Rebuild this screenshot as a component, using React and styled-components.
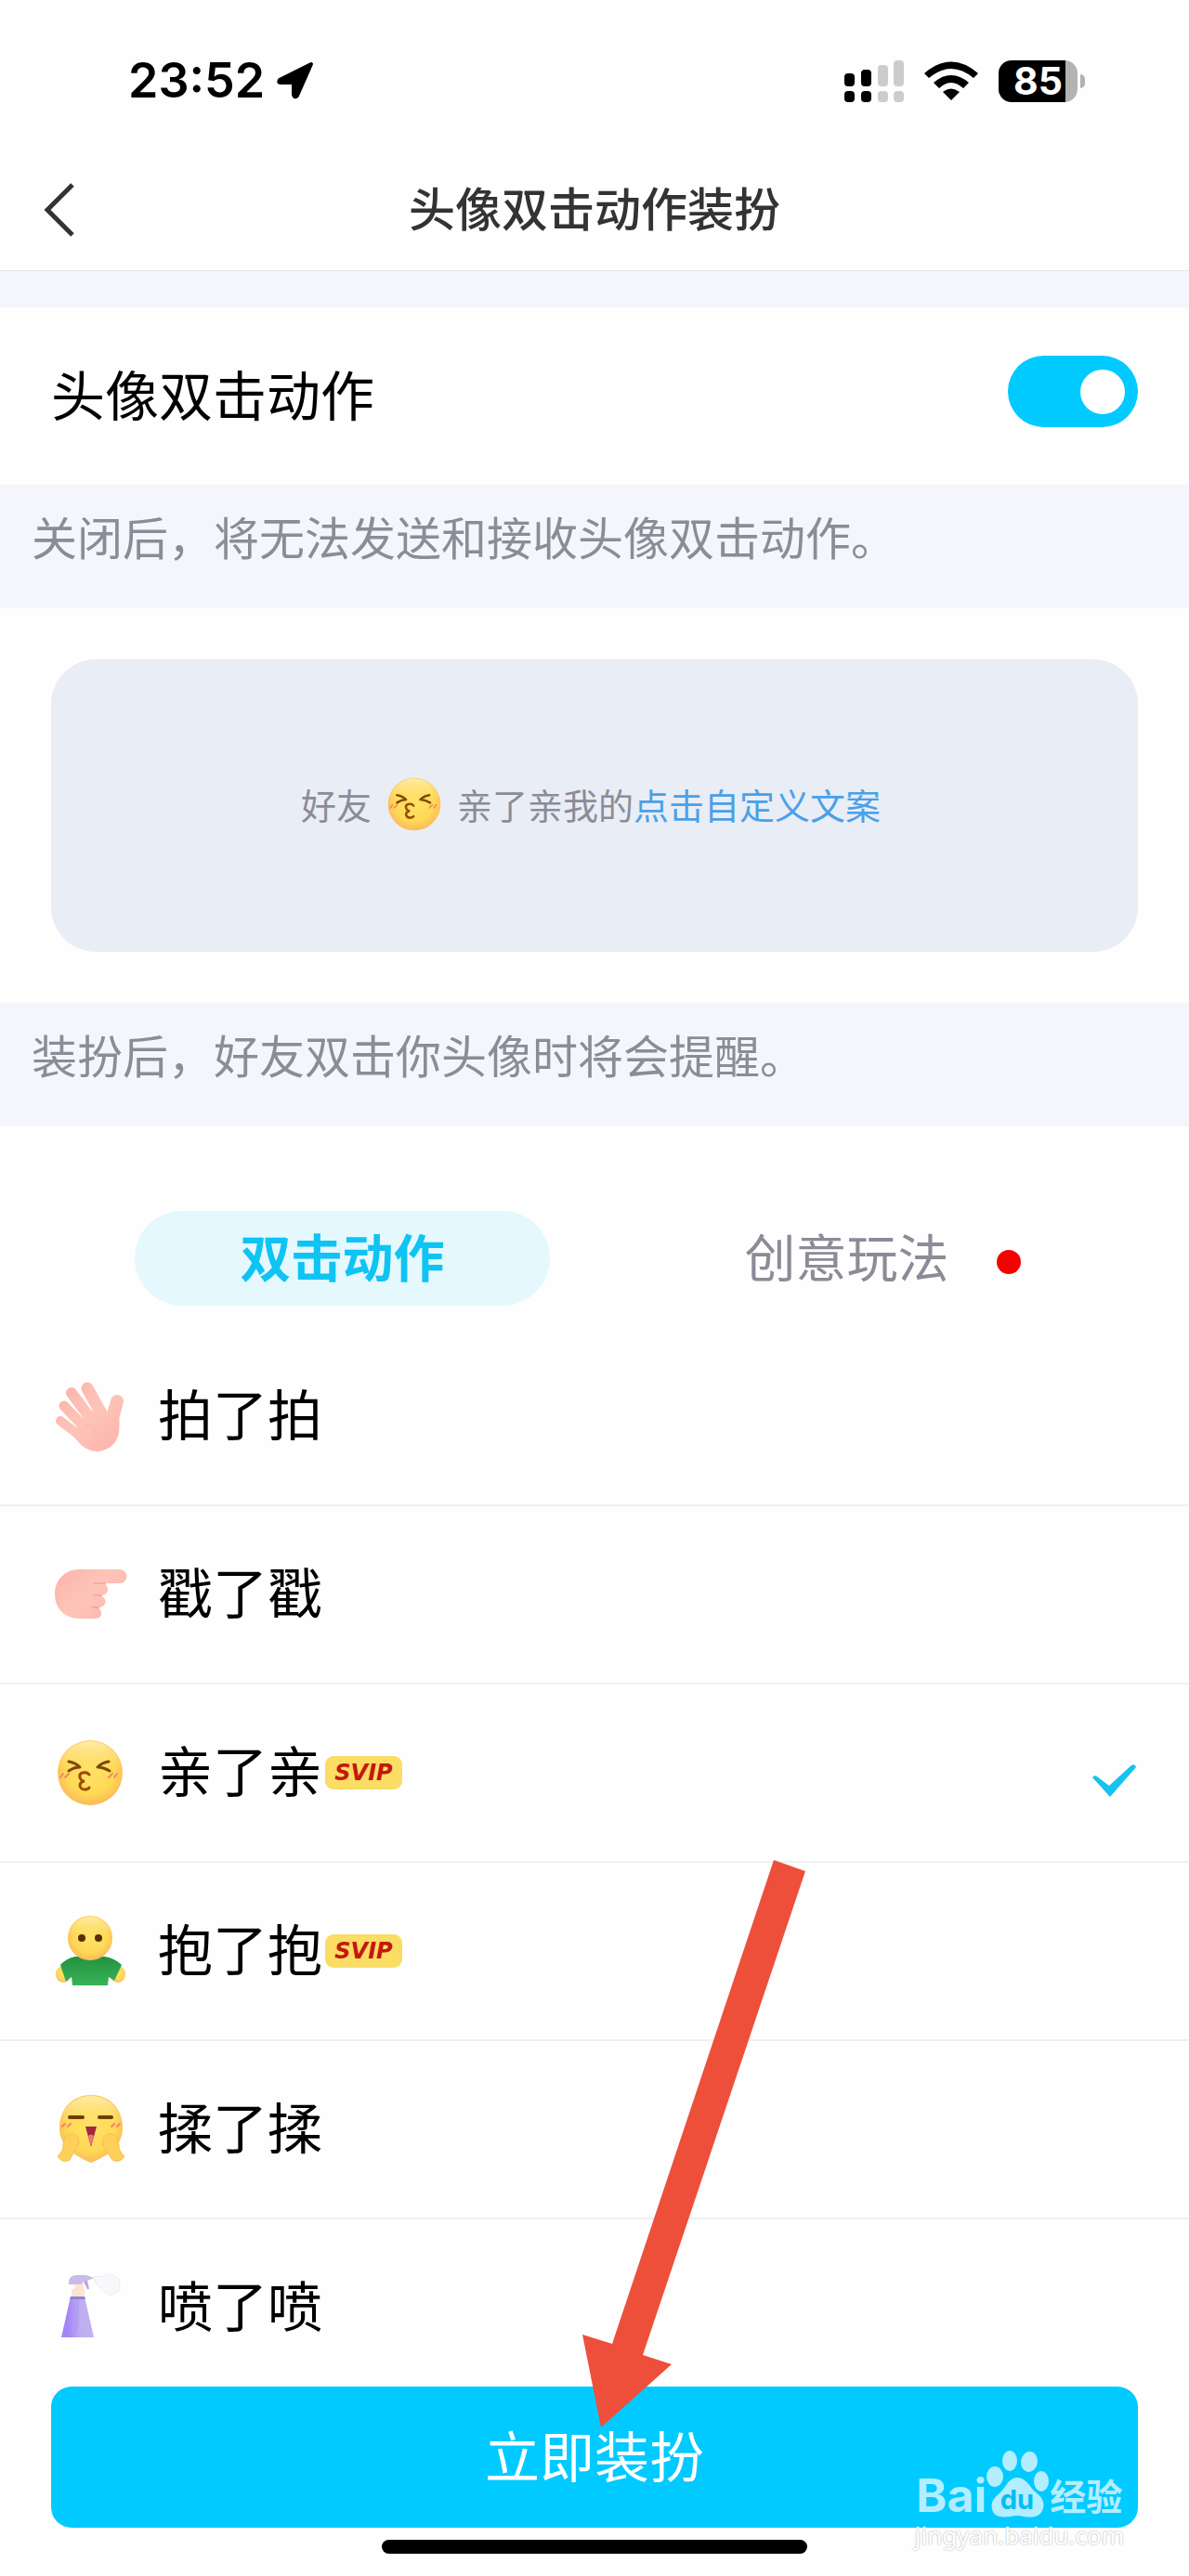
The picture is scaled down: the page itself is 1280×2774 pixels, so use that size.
import React, { useState } from "react";
import styled, { createGlobalStyle } from "styled-components";

const GlobalStyle = createGlobalStyle`
  *, *::before, *::after {
    box-sizing: border-box;
  }

  body {
    margin: 0;
    background: #fefefe;
    color: #000;
    font-family: "Noto Sans CJK SC", sans-serif;
  }
`;

const Page = styled.div`
  position: relative;
  display: flex;
  flex-direction: column;
  min-height: 100vh;
`;

const StatusBar = styled.div`
  display: flex;
  align-items: center;
  justify-content: space-between;
  height: 160px;
  padding: 14px 112px 0 138px;
`;

const StatusGroup = styled.div`
  display: flex;
  align-items: center;
  gap: ${(props) => props.$gap}px;
`;

const Clock = styled.span`
  font-family: "Inter", sans-serif;
  font-size: 52px;
  font-weight: 600;
  line-height: 60px;
`;

const Battery = styled.div`
  display: flex;
  align-items: center;
  gap: 3px;

  &::after {
    content: "";
    width: 5px;
    height: 15px;
    border-radius: 0 5px 5px 0;
    background: #b3b3b3;
  }
`;

const BatteryLevel = styled.span`
  width: 85px;
  height: 45px;
  border-radius: 14px;
  background: linear-gradient(to right, #000 85%, #b3b3b3 85%);
  color: #fff;
  font-family: "Inter", sans-serif;
  font-size: 41px;
  font-weight: 700;
  line-height: 45px;
  text-align: center;
`;

const Header = styled.header`
  display: grid;
  grid-template-columns: 80px 1fr 80px;
  align-items: center;
  height: 132px;
  border-bottom: 1px solid #e4e8e8;
`;

const BackButton = styled.button`
  display: flex;
  justify-content: flex-end;
  padding: 0;
  border: none;
  background: none;
  cursor: pointer;
`;

const Title = styled.h1`
  margin: 0;
  padding-bottom: 8px;
  color: #333;
  font-size: 50px;
  font-weight: 500;
  line-height: 72px;
  text-align: center;
`;

const Divider = styled.div`
  height: 39px;
  background: #f4f6fb;
`;

const SwitchRow = styled.label`
  display: flex;
  justify-content: space-between;
  height: 191px;
  padding: 52px 55px 62px;
  font-size: 58px;
  line-height: 80px;
`;

const Switch = styled.input`
  appearance: none;
  display: flex;
  align-items: center;
  justify-content: ${(props) => (props.checked ? "flex-end" : "flex-start")};
  width: 140px;
  height: 77px;
  margin: 0;
  padding: 0 14px;
  border-radius: 39px;
  background: ${(props) => (props.checked ? "#00caff" : "#d5d8df")};
  cursor: pointer;

  &::before {
    content: "";
    width: 48px;
    height: 48px;
    border-radius: 50%;
    background: #fff;
  }
`;

const Hint = styled.p`
  margin: 0;
  padding: 20px 34px 43px;
  background: #f4f6fb;
  color: #8b8c97;
  font-size: 49px;
  line-height: 70px;
`;

const PreviewSection = styled.section`
  padding: 55px;
`;

const Preview = styled.div`
  display: flex;
  align-items: center;
  justify-content: center;
  height: 315px;
  padding: 0 8px 4px 0;
  border-radius: 48px;
  background: #e9edf6;
  color: #8b8c97;
  font-size: 38px;
  line-height: 56px;
`;

const PreviewEmoji = styled.span`
  display: flex;
  margin: 0 12px;
`;

const CustomLink = styled.a`
  color: #4ba0e6;
  text-decoration: none;
`;

const Tabs = styled.div`
  display: grid;
  grid-template-columns: 1fr 1fr;
  gap: 96px;
  padding: 91px 145px 24px;
`;

const Tab = styled.button`
  display: flex;
  align-items: center;
  justify-content: center;
  position: relative;
  height: 102px;
  padding: 0 0 8px;
  border: none;
  border-radius: 51px;
  background: ${(props) => (props.$active ? "#e4f8fe" : "transparent")};
  color: ${(props) => (props.$active ? "#0fc3f2" : "#8b8c97")};
  font-family: inherit;
  font-size: 55px;
  font-weight: ${(props) => (props.$active ? 700 : 400)};
  cursor: pointer;
`;

const RedDot = styled.span`
  position: absolute;
  top: 42px;
  right: 36px;
  width: 26px;
  height: 26px;
  border-radius: 50%;
  background: #f60000;
`;

const ActionList = styled.ul`
  margin: 0;
  padding: 0;
  list-style: none;
`;

const ActionRow = styled.label`
  display: flex;
  align-items: center;
  height: 192px;
  padding: 0 55px;
  border-bottom: 2px solid #f0f0f1;
  cursor: pointer;
`;

const HiddenRadio = styled.input`
  appearance: none;
  width: 0;
  height: 0;
  margin: 0;
`;

const ActionIcon = styled.span`
  display: flex;
  margin-right: 31px;
`;

const ActionName = styled.span`
  padding: 0 3px 8px 0;
  font-size: 59px;
  line-height: 84px;
`;

const SvipBadge = styled.span`
  width: 83px;
  height: 36px;
  border-radius: 9px;
  background: #fbdc65;
  color: #c3180e;
  font-family: "DejaVu Sans", sans-serif;
  font-size: 24px;
  font-style: italic;
  font-weight: 700;
  line-height: 36px;
  text-align: center;
`;

const CheckMark = styled.svg`
  margin-left: auto;
`;

const Footer = styled.footer`
  position: relative;
  display: flex;
  flex-direction: column;
  align-items: center;
  margin-top: -12px;
  padding: 0 55px 24px;
  background: #fefefe;
`;

const ApplyButton = styled.button`
  width: 100%;
  height: 152px;
  padding: 0 0 8px;
  border: none;
  border-radius: 22px;
  background: #00caff;
  color: #fff;
  font-family: inherit;
  font-size: 59px;
  cursor: pointer;
`;

const HomeIndicator = styled.div`
  width: 458px;
  height: 15px;
  margin-top: 13px;
  border-radius: 8px;
  background: #000;
`;

const Pointer = styled.svg`
  position: absolute;
  left: calc(50% - 13px);
  bottom: 160px;
  pointer-events: none;
`;

const Watermark = styled.div`
  position: absolute;
  right: 70px;
  bottom: 26px;
  display: flex;
  flex-direction: column;
  align-items: center;
  pointer-events: none;
`;

const Brand = styled.div`
  display: flex;
  align-items: flex-end;
  color: #b4edff;
  font-family: "Inter", "Noto Sans CJK SC", sans-serif;
  font-size: 50px;
  font-weight: 700;
  line-height: 50px;
`;

const BrandSuffix = styled.span`
  font-size: 39px;
  line-height: 47px;
`;

const SiteName = styled.span`
  color: #fff;
  font-family: "Noto Sans", sans-serif;
  font-size: 26px;
  line-height: 36px;
  text-shadow: 0 0 2px #b9bcbd, 0 0 2px #d0d2d3;
`;

const LocationArrow = () => (
  <svg width="42" height="42" viewBox="0 0 42 42">
    <path
      d="M38 3 L4 20 Q2 23 5 23 L18 23 Q19 23 19 24 L19 36 Q20 40 23 37 Z"
      stroke="#000"
      strokeWidth="4"
      strokeLinejoin="round"
    />
  </svg>
);

const Signal = () => (
  <svg width="64" height="45" viewBox="0 0 64 45">
    <g fill="#000">
      <rect x="0" y="14" width="11" height="14" rx="4" />
      <rect x="0" y="33" width="11" height="12" rx="4" />
      <rect x="18" y="10" width="11" height="18" rx="4" />
      <rect x="18" y="33" width="11" height="12" rx="4" />
    </g>
    <g fill="#ccc">
      <rect x="36" y="5" width="11" height="23" rx="4" />
      <rect x="36" y="33" width="11" height="12" rx="4" />
      <rect x="53" y="0" width="11" height="28" rx="4" />
      <rect x="53" y="33" width="11" height="12" rx="4" />
    </g>
  </svg>
);

const Wifi = () => (
  <svg width="58" height="43" viewBox="0 0 58 43">
    <path d="M0 13 Q29 -12 58 13 L53 18 Q29 -2 5 18 Z" />
    <path d="M10 23 Q29 7 48 23 L42 29 Q29 17 16 29 Z" />
    <path d="M20 33 Q29 26 38 33 L29 42 Z" />
  </svg>
);

const YellowShade = () => (
  <defs>
    <radialGradient id="yellow" cx="0.5" cy="0.45" r="0.58">
      <stop offset="0" stopColor="#ffe169" />
      <stop offset="0.65" stopColor="#fed956" />
      <stop offset="1" stopColor="#fbb55a" />
    </radialGradient>
    <linearGradient id="shine" x1="0" y1="0" x2="0" y2="1">
      <stop offset="0" stopColor="#ffeeb4" stopOpacity="0.9" />
      <stop offset="0.45" stopColor="#ffe27b" stopOpacity="0" />
    </linearGradient>
  </defs>
);

const PinkShade = () => (
  <defs>
    <linearGradient id="pink" gradientUnits="userSpaceOnUse" x1="5" y1="10" x2="70" y2="76">
      <stop offset="0" stopColor="#fbb2a9" />
      <stop offset="0.5" stopColor="#fec4b8" />
      <stop offset="1" stopColor="#fbb5ae" />
    </linearGradient>
  </defs>
);

const WaveIcon = () => (
  <svg width="84" height="84" viewBox="0 0 84 84">
    <PinkShade />
    <g stroke="url(#pink)" strokeLinecap="round">
      <path d="M39 12 L54 39" strokeWidth="13" />
      <path d="M22 17 L42 44" strokeWidth="12" />
      <path d="M14 31 L34 52" strokeWidth="11" />
      <path d="M10 47 L32 64" strokeWidth="10" />
      <path d="M71 26 L66 44" strokeWidth="14" />
    </g>
    <path
      d="M30 47 Q40 38 50 33 Q57 44 61 39 L73 38 Q74 50 73 60 Q69 78 50 80 Q35 80 24 63 Z"
      fill="url(#pink)"
    />
    <path d="M36 53 Q47 49 48 62" fill="none" stroke="#fbb2a9" strokeWidth="2" opacity="0.6" />
  </svg>
);

const PokeIcon = () => (
  <svg width="84" height="84" viewBox="0 0 84 84">
    <PinkShade />
    <path
      d="M30 15 H74 A7 7 0 0 1 74 30 H58 Q63 36 60 40 Q58 43 54 43 Q60 47 58 52 Q56 56 51 56 Q56 61 53 66 Q51 68 46 68 H32 C14 68 4 57 4 41 C4 27 15 15 30 15 Z"
      fill="url(#pink)"
    />
    <path
      d="M58 30 H46 M54 43 H46 M51 56 H44"
      stroke="#f5a09d"
      strokeWidth="2"
      strokeLinecap="round"
      opacity="0.7"
    />
  </svg>
);

const KissIcon = ({ size = 84 }) => (
  <svg width={size} height={size} viewBox="0 0 84 84">
    <YellowShade />
    <circle cx="42" cy="42" r="35" fill="url(#yellow)" />
    <circle cx="42" cy="42" r="34" fill="url(#shine)" />
    <g fill="none" stroke="#7d4708" strokeWidth="3" strokeLinecap="round" strokeLinejoin="round">
      <path d="M19 30 Q26 31 31 36 Q25 36 19 40" />
      <path d="M62 30 Q55 31 50 36 Q56 36 63 40" />
    </g>
    <path
      d="M41 44 Q39 41 34 42 Q30 43 31 47 Q32 51 36 51 Q31 52 31 56 Q32 60 36 60 Q40 60 41 58"
      fill="none"
      stroke="#994c04"
      strokeWidth="3"
      strokeLinecap="round"
    />
    <path
      d="M10 47 L13 43 M15 47 L19 43 M62 47 L66 43 M68 47 L71 43"
      stroke="#f5836a"
      strokeWidth="2"
      strokeLinecap="round"
    />
  </svg>
);

const HugIcon = () => (
  <svg width="84" height="84" viewBox="0 0 84 84">
    <YellowShade />
    <defs>
      <linearGradient id="shirt" x1="0" y1="0" x2="0" y2="1">
        <stop offset="0" stopColor="#23923f" />
        <stop offset="1" stopColor="#39b358" />
      </linearGradient>
    </defs>
    <ellipse cx="13" cy="67" rx="8" ry="9" fill="url(#yellow)" />
    <ellipse cx="72" cy="67" rx="8" ry="9" fill="url(#yellow)" />
    <path
      d="M26 48 H58 Q69 50 76 57 L68 74 L62 70 L61 79 H23 L22 70 L16 75 L10 57 Q16 50 26 48 Z"
      fill="url(#shirt)"
    />
    <circle cx="42" cy="28" r="24" fill="url(#yellow)" />
    <circle cx="42" cy="28" r="23" fill="url(#shine)" />
    <circle cx="33" cy="28" r="4" fill="#5b2d06" />
    <circle cx="51" cy="28" r="4" fill="#5b2d06" />
  </svg>
);

const RubIcon = () => (
  <svg width="84" height="84" viewBox="0 0 84 84">
    <YellowShade />
    <path
      d="M43 5 C63 5 77 20 77 40 C77 60 62 70 43 78 C24 70 9 60 9 40 C9 20 23 5 43 5 Z"
      fill="url(#yellow)"
    />
    <circle cx="43" cy="40" r="34" fill="url(#shine)" />
    <path
      d="M15 50 Q22 44 28 49 Q33 56 26 64 Q23 69 20 75 Q12 79 7 71 Q14 65 13 58 Z"
      fill="#fdd05a"
      stroke="#f9bd50"
    />
    <path
      d="M70 50 Q63 44 58 49 Q52 56 59 64 Q62 69 66 75 Q74 79 79 71 Q72 65 73 58 Z"
      fill="#fdd05a"
      stroke="#f9bd50"
    />
    <path d="M20 29 H34 M52 29 H65" stroke="#6e3d06" strokeWidth="4" strokeLinecap="round" />
    <path d="M37 39 H49 L43 61 Z" fill="#a3283c" />
    <path d="M40 49 Q43 46 46 49 L43 60 Z" fill="#f07583" />
    <path
      d="M12 39 L15 36 M18 39 L21 36 M65 39 L68 36 M71 39 L74 36"
      stroke="#f5836a"
      strokeWidth="2"
      strokeLinecap="round"
    />
  </svg>
);

const SprayIcon = () => (
  <svg width="84" height="84" viewBox="0 0 84 84">
    <defs>
      <linearGradient id="bottle" x1="0" y1="0" x2="1" y2="0">
        <stop offset="0.2" stopColor="#a485f7" />
        <stop offset="0.6" stopColor="#bfaef0" />
        <stop offset="1" stopColor="#c2b0f5" />
      </linearGradient>
    </defs>
    <path
      d="M45 9 Q51 7 56 9 Q62 3 68 8 Q76 10 73 17 Q77 23 70 25 Q66 31 60 27 Q54 22 49 17 Z"
      fill="#f9f7fa"
      stroke="#efebf3"
    />
    <path d="M36 14 L40 22 L38 12 Z" fill="#b9addd" stroke="#b9addd" strokeWidth="2" />
    <path d="M25 16 H35 V22 H36 V30 H22 V23 L26 21 Z" fill="#fae5cf" />
    <path d="M19 15 Q19 8 26 7 H38 L46 10 L42 12 L35 13 L33 17 H19 Z" fill="#c7bdea" />
    <path d="M21 30 H36 L46 74 H11 Z" fill="url(#bottle)" />
    <path d="M21 30 H36 L37 33 H20 Z" fill="#9383d3" />
    <path d="M29 33 L27 68" stroke="#ab98e6" strokeWidth="1" />
  </svg>
);

const Paw = () => (
  <svg width="68" height="74" viewBox="0 0 68 74">
    <g fill="#b4edff">
      <ellipse cx="9" cy="29" rx="9" ry="11" />
      <ellipse cx="25" cy="12" rx="8" ry="11" />
      <ellipse cx="46" cy="13" rx="9" ry="11" transform="rotate(8 46 13)" />
      <ellipse cx="59" cy="34" rx="8" ry="11" />
      <path d="M33 30 C42 30 46 39 52 45 C59 50 63 56 61 63 C58 74 48 73 40 72 Q33 70 26 72 C17 73 8 73 6 64 C4 56 9 51 15 46 C21 40 24 30 33 30 Z" />
    </g>
    <text
      x="33"
      y="64"
      fill="#00bdf2"
      fontFamily="Inter, sans-serif"
      fontSize="29"
      fontWeight="700"
      textAnchor="middle"
    >
      du
    </text>
  </svg>
);

const actions = [
  { id: "pat", name: "拍了拍", Icon: WaveIcon },
  { id: "poke", name: "戳了戳", Icon: PokeIcon },
  { id: "kiss", name: "亲了亲", Icon: KissIcon, svip: true },
  { id: "hug", name: "抱了抱", Icon: HugIcon, svip: true },
  { id: "rub", name: "揉了揉", Icon: RubIcon },
  { id: "spray", name: "喷了喷", Icon: SprayIcon },
];

const App = () => {
  const [enabled, setEnabled] = useState(true);
  const [tab, setTab] = useState("action");
  const [selected, setSelected] = useState("kiss");

  return (
    <Page>
      <GlobalStyle />
      <StatusBar>
        <StatusGroup $gap={12}>
          <Clock>23:52</Clock>
          <LocationArrow />
        </StatusGroup>
        <StatusGroup $gap={22}>
          <Signal />
          <Wifi />
          <Battery>
            <BatteryLevel>85</BatteryLevel>
          </Battery>
        </StatusGroup>
      </StatusBar>

      <Header>
        <BackButton aria-label="返回">
          <svg width="33" height="58" viewBox="0 0 33 58">
            <path d="M31 2 L4 29 L31 56" fill="none" stroke="#333" strokeWidth="5" />
          </svg>
        </BackButton>
        <Title>头像双击动作装扮</Title>
      </Header>
      <Divider />

      <SwitchRow>
        头像双击动作
        <Switch
          type="checkbox"
          checked={enabled}
          onChange={(e) => setEnabled(e.target.checked)}
        />
      </SwitchRow>
      <Hint>关闭后，将无法发送和接收头像双击动作。</Hint>

      <PreviewSection>
        <Preview>
          好友
          <PreviewEmoji>
            <KissIcon size={68} />
          </PreviewEmoji>
          亲了亲我的<CustomLink href="#custom">点击自定义文案</CustomLink>
        </Preview>
      </PreviewSection>
      <Hint>装扮后，好友双击你头像时将会提醒。</Hint>

      <Tabs>
        <Tab $active={tab === "action"} onClick={() => setTab("action")}>
          双击动作
        </Tab>
        <Tab $active={tab === "creative"} onClick={() => setTab("creative")}>
          创意玩法
          <RedDot />
        </Tab>
      </Tabs>

      <ActionList>
        {actions.map(({ id, name, Icon, svip }) => (
          <li key={id}>
            <ActionRow>
              <HiddenRadio
                type="radio"
                name="action"
                checked={selected === id}
                onChange={() => setSelected(id)}
              />
              <ActionIcon>
                <Icon />
              </ActionIcon>
              <ActionName>{name}</ActionName>
              {svip && <SvipBadge>SVIP</SvipBadge>}
              {selected === id && (
                <CheckMark width="50" height="52" viewBox="0 0 50 52">
                  <path
                    d="M1 31 Q3 28 6 30 L19 40 L43 18 Q47 16 48 20 L20 52 Z"
                    fill="#14c3ee"
                  />
                </CheckMark>
              )}
            </ActionRow>
          </li>
        ))}
      </ActionList>

      <Footer>
        <ApplyButton>立即装扮</ApplyButton>
        <HomeIndicator />
        <Pointer width="240" height="611" viewBox="0 0 240 611">
          <path d="M206 0 L240 12 L65 533 L96 543 L20 611 L0 511 L32 521 Z" fill="#ee4f3a" />
        </Pointer>
        <Watermark>
          <Brand>
            Bai
            <Paw />
            <BrandSuffix>经验</BrandSuffix>
          </Brand>
          <SiteName>jingyan.baidu.com</SiteName>
        </Watermark>
      </Footer>
    </Page>
  );
};

export default App;
